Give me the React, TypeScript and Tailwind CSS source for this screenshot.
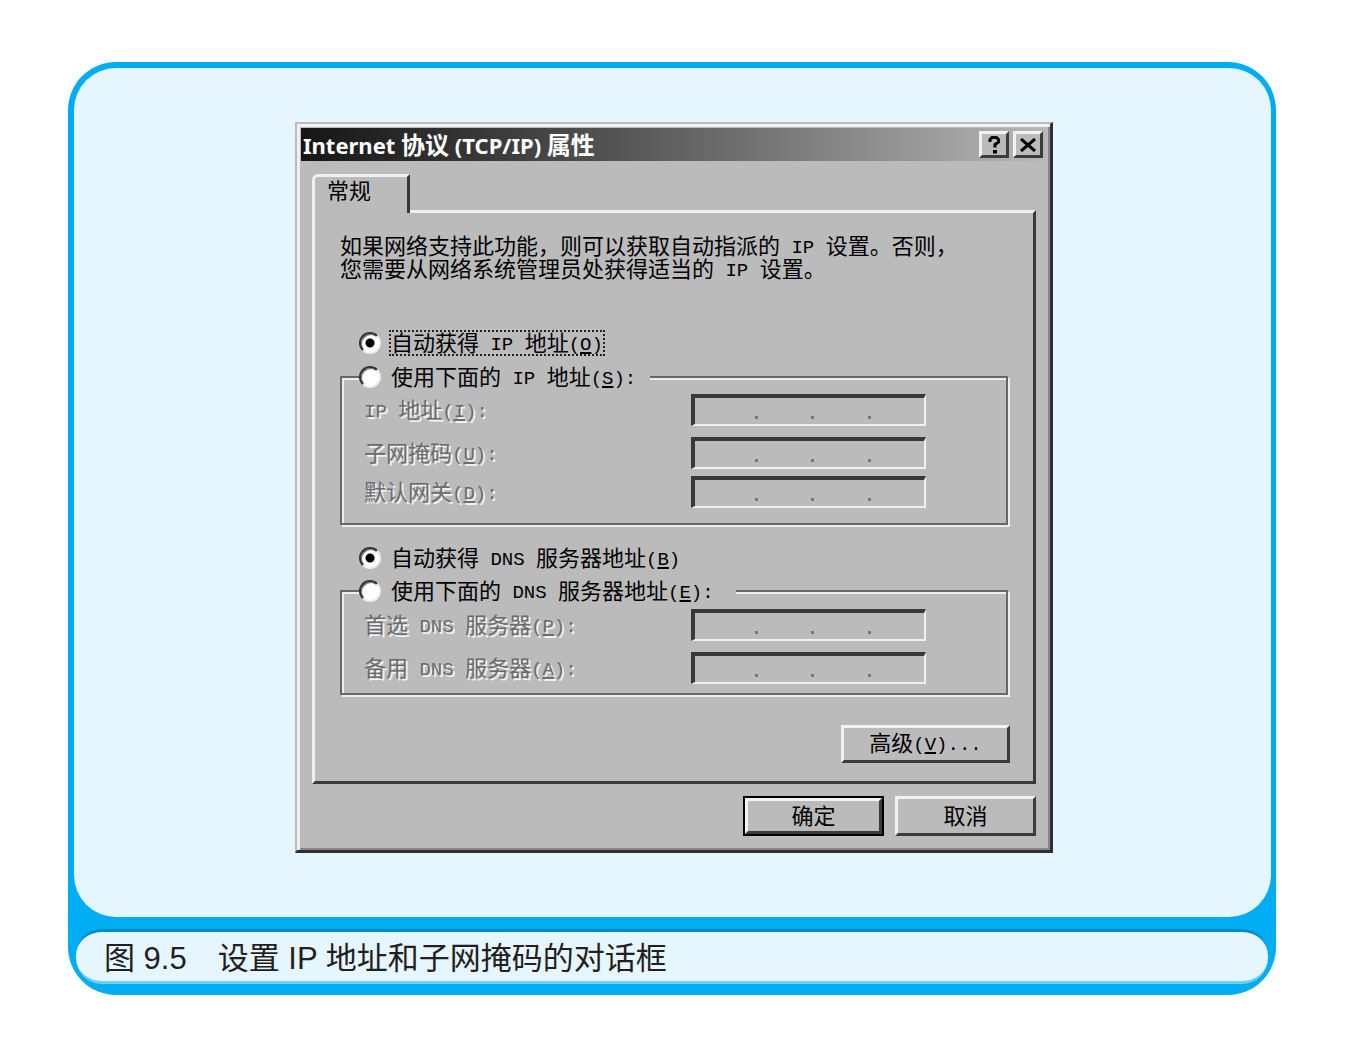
import React, { useState } from "react";

function Latin({ children }: { children: React.ReactNode }) {
  return (
    <span className="whitespace-pre align-[1px] font-['Liberation_Mono','Noto_Sans_CJK_SC',monospace] text-[19px] leading-none">
      {children}
    </span>
  );
}

function Key({ letter, tail = "" }: { letter: string; tail?: string }) {
  return (
    <Latin>
      (<span className="underline decoration-2 underline-offset-2">{letter}</span>){tail}
    </Latin>
  );
}

type RadioProps = {
  id: string;
  name: string;
  checked: boolean;
  focused?: boolean;
  onChange: () => void;
  children: React.ReactNode;
};

function Radio({ id, name, checked, focused, onChange, children }: RadioProps) {
  return (
    <div className="flex h-6 items-center gap-2">
      <input
        id={id}
        type="radio"
        name={name}
        checked={checked}
        onChange={onChange}
        className="size-[22px] shrink-0 appearance-none rounded-full border-2 border-t-[#333] border-r-[#eee] border-b-[#eee] border-l-[#333] bg-white shadow-[inset_1px_1px_0_#777] outline-none checked:bg-[radial-gradient(circle,#000_4px,#fff_5px)]"
      />
      <label
        htmlFor={id}
        className={
          focused
            ? "h-[26px] whitespace-nowrap border-2 border-dotted border-[#222] leading-[18px]"
            : "h-[26px] whitespace-nowrap border-2 border-transparent leading-[18px]"
        }
      >
        {children}
      </label>
    </div>
  );
}

function AddressRow({ id, name, children }: { id: string; name: string; children: React.ReactNode }) {
  return (
    <div className="flex h-8 items-start">
      <label
        htmlFor={`${id}-0`}
        className="w-[327px] shrink-0 whitespace-nowrap leading-7 text-[#6c6c6c] [text-shadow:2px_2px_0_#f2f2f2]"
      >
        {children}
      </label>
      <div
        role="group"
        aria-label={name}
        className="flex h-8 w-[235px] items-center border-t-4 border-r-2 border-b-2 border-l-4 border-t-[#383838] border-r-[#f0f0f0] border-b-[#f0f0f0] border-l-[#383838] pl-[6px]"
      >
        {[0, 1, 2, 3].map((n) => (
          <React.Fragment key={n}>
            {n > 0 && <span className="mt-3 size-[3px] shrink-0 bg-[#777]" />}
            <input
              id={`${id}-${n}`}
              aria-label={`${name} ${n + 1}`}
              disabled
              className="h-full w-full min-w-0 flex-1 bg-transparent text-center text-[19px]"
            />
          </React.Fragment>
        ))}
      </div>
    </div>
  );
}

const fieldset =
  "w-full border-2 border-[#686868] pl-[22px] shadow-[inset_2px_2px_0_#eee,2px_2px_0_#eee]";

const raised =
  "border-[3px] border-t-[#f2f2f2] border-r-[#3c3c3c] border-b-[#3c3c3c] border-l-[#f2f2f2] bg-[#bbb] leading-none";

function Dialog() {
  const [ipMode, setIpMode] = useState("auto");
  const [dnsMode, setDnsMode] = useState("auto");

  return (
    <section
      aria-label="Internet 协议 (TCP/IP) 属性"
      className="w-full max-w-[758px] border-t-2 border-r-[3px] border-b-[3px] border-l-2 border-t-[#bbb] border-r-[#303030] border-b-[#303030] border-l-[#bbb] bg-[#bbb] pt-1 pr-[3px] pb-[14px] pl-1 font-['Noto_Sans_CJK_SC',sans-serif] text-[22px] text-black shadow-[inset_3px_3px_0_#f0f0f0,inset_-2px_-2px_0_#858585]"
    >
      <header className="flex h-[33px] items-center bg-linear-to-r from-[#161616] to-[#b8b8b8] pr-1 pl-[2px] text-white">
        <h1 className="flex-1 whitespace-nowrap font-['Noto_Sans','Noto_Sans_CJK_SC',sans-serif] text-[22px] leading-8 font-bold">
          Internet <span className="text-[24px] leading-none">协议</span> (TCP/IP){" "}
          <span className="text-[24px] leading-none">属性</span>
        </h1>
        <div className="flex gap-1">
          <button aria-label="帮助" className={`${raised} flex h-[27px] w-[30px] items-center justify-center`}>
            <svg width="14" height="18" viewBox="0 0 14 18" fill="none" aria-hidden="true">
              <path d="M3 6V3.500l2-2h4.500l2 2v2.500L8 8.500v3" stroke="#000" strokeWidth="3" />
              <path d="M6 14h4v3.500h-4z" fill="#000" />
            </svg>
          </button>
          <button aria-label="关闭" className={`${raised} flex h-[27px] w-[30px] items-center justify-center`}>
            <svg width="16" height="14" viewBox="0 0 16 14" fill="none" aria-hidden="true">
              <path d="M1 1l14 12M15 1L1 13" stroke="#000" strokeWidth="3" />
            </svg>
          </button>
        </div>
      </header>

      <div className="pt-[13px] pr-[11px] pl-[11px]">
        <div role="tablist" className="relative z-10 -mb-[3px] flex">
          <button
            role="tab"
            aria-selected="true"
            className="h-[39px] w-[98px] rounded-tl-md border-t-[3px] border-r-[3px] border-l-[3px] border-t-[#f0f0f0] border-r-[#383838] border-l-[#f0f0f0] bg-[#bbb] pb-3 pl-3 text-left leading-6"
          >
            常规
          </button>
        </div>
        <div
          role="tabpanel"
          className="border-[3px] border-t-[#f0f0f0] border-r-[#3a3a3a] border-b-[#3a3a3a] border-l-[#f0f0f0] pt-[21px] pr-[25px] pb-[18px] pl-[25px]"
        >
          <p className="leading-[21px]">
            <span className="block h-[23px]">
              如果网络支持此功能，则可以获取自动指派的<Latin> IP </Latin>设置。否则，
            </span>
            <span className="block h-[23px]">
              您需要从网络系统管理员处获得适当的<Latin> IP </Latin>设置。
            </span>
          </p>

          <div className="mt-[51px] pl-[19px]">
            <Radio id="ip-auto" name="ip" focused checked={ipMode === "auto"} onChange={() => setIpMode("auto")}>
              自动获得<Latin> IP </Latin>地址<Key letter="O" />
            </Radio>
          </div>
          <fieldset className={`${fieldset} mt-[10px] pt-[5px] pb-[15px]`}>
            <legend className="-ml-[5px] bg-[#bbb] pr-3">
              <Radio id="ip-manual" name="ip" checked={ipMode === "manual"} onChange={() => setIpMode("manual")}>
                使用下面的<Latin> IP </Latin>地址<Key letter="S" tail=":" />
              </Radio>
            </legend>
            <AddressRow id="address" name="IP 地址">
              <Latin>IP </Latin>地址<Key letter="I" tail=":" />
            </AddressRow>
            <div className="mt-[11px] mb-[7px]">
              <AddressRow id="mask" name="子网掩码">
                子网掩码<Key letter="U" tail=":" />
              </AddressRow>
            </div>
            <AddressRow id="gateway" name="默认网关">
              默认网关<Key letter="D" tail=":" />
            </AddressRow>
          </fieldset>

          <div className="mt-[21px] pl-[19px]">
            <Radio id="dns-auto" name="dns" checked={dnsMode === "auto"} onChange={() => setDnsMode("auto")}>
              自动获得<Latin> DNS </Latin>服务器地址<Key letter="B" />
            </Radio>
          </div>
          <fieldset className={`${fieldset} mt-[9px] pt-[6px] pb-[9px]`}>
            <legend className="-ml-[5px] bg-[#bbb] pr-5">
              <Radio id="dns-manual" name="dns" checked={dnsMode === "manual"} onChange={() => setDnsMode("manual")}>
                使用下面的<Latin> DNS </Latin>服务器地址<Key letter="E" tail=":" />
              </Radio>
            </legend>
            <AddressRow id="dns-first" name="首选 DNS 服务器">
              首选<Latin> DNS </Latin>服务器<Key letter="P" tail=":" />
            </AddressRow>
            <div className="mt-[11px]">
              <AddressRow id="dns-second" name="备用 DNS 服务器">
                备用<Latin> DNS </Latin>服务器<Key letter="A" tail=":" />
              </AddressRow>
            </div>
          </fieldset>

          <div className="mt-[30px] flex justify-end">
            <button className={`${raised} -mr-[2px] h-[38px] w-[169px] pb-1`}>
              高级<Key letter="V" tail="..." />
            </button>
          </div>
        </div>

        <div className="mt-3 flex justify-end gap-[11px]">
          <div className="border-2 border-black">
            <button className={`${raised} h-9 w-[137px] pb-1`}>确定</button>
          </div>
          <button className={`${raised} h-10 w-[141px] pb-1`}>取消</button>
        </div>
      </div>
    </section>
  );
}

export default function App() {
  return (
    <main className="min-h-screen bg-white pt-[62px] pr-[70px] pb-[60px] pl-[68px]">
      <figure className="rounded-[48px] bg-[#00adf2] pt-[6px] pb-[11px]">
        <div className="mr-[5px] ml-[6px] flex justify-center rounded-[42px] bg-[#e6f6fe] pt-[54px] pb-[64px] pl-[3px]">
          <Dialog />
        </div>
        <figcaption className="mt-3 mr-2 ml-2 rounded-[26px] border-t-[3px] border-b-[3px] border-t-[#008fcb] border-b-[#6dcff6] bg-[#e6f6fe] pt-1 pl-7 font-['Liberation_Sans','Noto_Sans_CJK_SC',sans-serif] text-[31px] leading-[45px] text-[#231f20]">
          图 9.5　设置 IP 地址和子网掩码的对话框
        </figcaption>
      </figure>
    </main>
  );
}
